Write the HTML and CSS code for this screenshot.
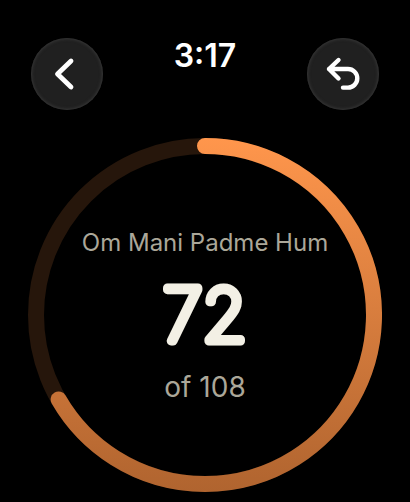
FILE: index.html
```html
<!DOCTYPE html>
<html lang="en">
<head>
    <meta charset="UTF-8">
    <meta name="viewport" content="width=device-width, initial-scale=1">
    <title>Mala Counter</title>
    <link rel="stylesheet" href="styles.css">
</head>

<body>

<header class="topbar">
    <button class="round-button" type="button" aria-label="Back">
        <svg viewBox="0 0 72 72" aria-hidden="true">
            <path d="M40 23 L26.500 36 L40 49" stroke-width="4.800"/>
        </svg>
    </button>
    <time class="clock">3:17</time>
    <button class="round-button" type="button" aria-label="Undo">
        <svg viewBox="0 0 72 72" aria-hidden="true">
            <path d="M31.500 22 L22 31 L31.500 40.500 M22 31 H41 A9.300 9.300 0 0 1 41 49.600 H36" stroke-width="4.400"/>
        </svg>
    </button>
</header>

<main class="counter">
    <svg class="ring" viewBox="0 0 354 354" aria-hidden="true">
        <defs>
            <linearGradient id="glow" gradientUnits="userSpaceOnUse" x1="177" y1="0" x2="177" y2="354">
                <stop offset="0" stop-color="#ff964c"/>
                <stop offset="1" stop-color="#b0642f"/>
            </linearGradient>
        </defs>
        <circle class="track" cx="177" cy="177" r="169"/>
        <!-- 72 of 108 beads = 240 degrees -->
        <path class="progress" d="M177 8 A169 169 0 1 1 30.640 261.500"/>
    </svg>
    <div class="info">
        <p class="mantra">Om Mani Padme Hum</p>
        <svg class="count" viewBox="0 0 120 96" role="img" aria-label="72">
            <text x="60" y="74" text-anchor="middle">72</text>
        </svg>
        <p class="total">of 108</p>
    </div>
</main>

</body>
</html>
```
FILE: styles.css
```css
body {
    margin: 0;
    background: #000;
    color: #fff;
    font-family: "Inter", "Roboto", sans-serif;
}

.topbar {
    display: flex;
    justify-content: space-between;
    align-items: flex-start;
    padding: 38px 31px 0;
}

.round-button {
    width: 72px;
    height: 72px;
    padding: 0;
    border: none;
    border-radius: 50%;
    background: #202020;
    box-shadow: inset 0 0 3px 1px #363636;
    cursor: pointer;
}

.round-button svg {
    display: block;
    width: 100%;
    fill: none;
    stroke: #fff;
    stroke-linecap: round;
    stroke-linejoin: round;
}

.clock {
    font-size: 32px;
    line-height: 36px;
    font-weight: 600;
}

.counter {
    display: grid;
    margin: 28px 28px 0;
}

.ring,
.info {
    grid-area: 1 / 1;
}

.ring {
    width: 100%;
    fill: none;
    stroke-width: 16;
}

.track {
    stroke: #26160b;
}

.progress {
    stroke: url(#glow);
    stroke-linecap: round;
}

.info {
    display: flex;
    flex-direction: column;
    align-items: center;
    justify-content: center;
    color: #aba799;
}

.mantra,
.total {
    margin: 0;
}

.mantra {
    font-size: 24px;
    line-height: 32px;
}

.count {
    width: 120px;
    height: 96px;
    margin: 8px 0;
    overflow: visible;
    fill: #f3f0e5;
    stroke: #f3f0e5;
    stroke-width: 9;
    stroke-linejoin: round;
    font-size: 72px;
    font-weight: 100;
}

.total {
    font-size: 28px;
    line-height: 32px;
}
```
